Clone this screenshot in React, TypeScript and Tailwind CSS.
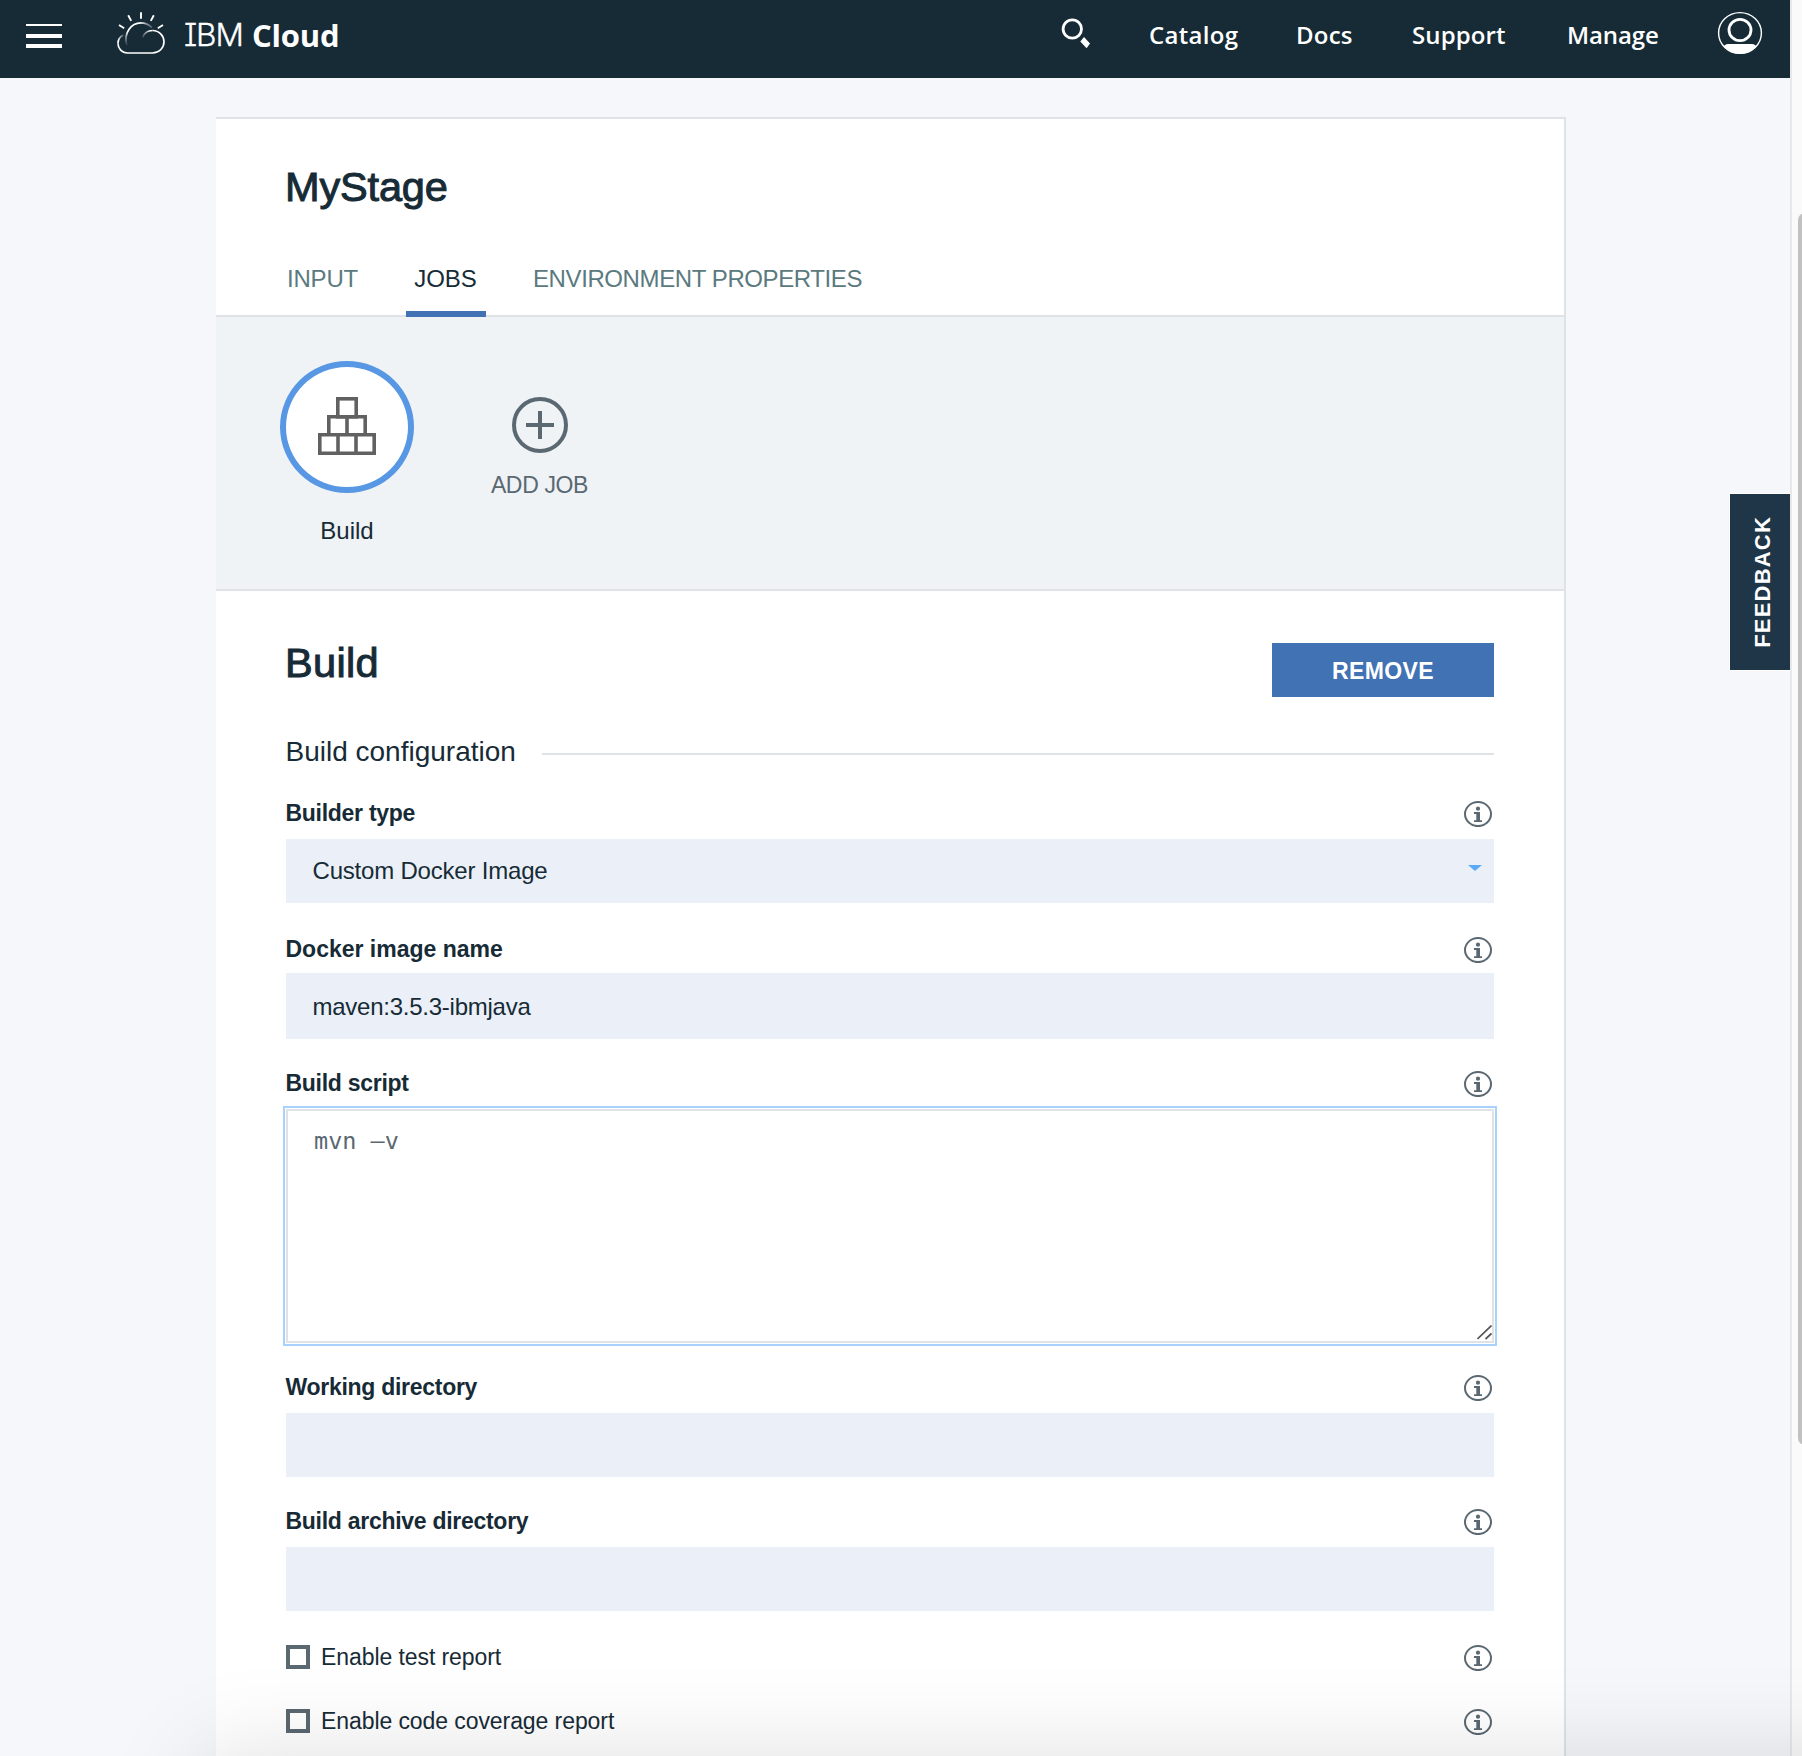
import type { ReactNode } from 'react';

function CloudLogo() {
  return (
    <svg width="50" height="44" viewBox="116 11 50 44" fill="none" stroke="#fff" strokeWidth="1.7" className="block">
      <defs>
        <linearGradient id="arcFade" gradientUnits="userSpaceOnUse" x1="126" y1="46" x2="153" y2="26">
          <stop offset="0" stopColor="#fff" stopOpacity="0" />
          <stop offset="0.3" stopColor="#fff" />
          <stop offset="0.75" stopColor="#fff" />
          <stop offset="1" stopColor="#fff" stopOpacity="0.1" />
        </linearGradient>
        <linearGradient id="rightFade" gradientUnits="userSpaceOnUse" x1="142" y1="37" x2="150" y2="30">
          <stop offset="0" stopColor="#fff" stopOpacity="0.1" />
          <stop offset="1" stopColor="#fff" />
        </linearGradient>
        <linearGradient id="leftFade" gradientUnits="userSpaceOnUse" x1="124" y1="34" x2="118" y2="40">
          <stop offset="0" stopColor="#fff" stopOpacity="0.1" />
          <stop offset="1" stopColor="#fff" />
        </linearGradient>
      </defs>
      <path d="M126.6 45C123.5 33 131 22.8 141 22.8c4.400 0 8 1.700 11 4.500" stroke="url(#arcFade)" />
      <path d="M142.500 37.500C144.500 32.500 148.500 30.500 152.500 30.500" stroke="url(#rightFade)" />
      <path d="M152.500 30.500c6.500 0 11.500 5 11.500 11.300S159 53 152.500 53H127.500c-5.500 0-9.500-4.300-9.500-9.500" />
      <path d="M118 43.500c0-3.800 2-7 5.500-8.600" stroke="url(#leftFade)" />
      <path d="M141 12.200v6.500M128.200 15.300l3 5.600M153.800 15.300l-3 5.600M119 25l5.200 3.300M163 25l-5.200 3.300" strokeWidth="1.900" />
    </svg>
  );
}

function SearchIcon() {
  return (
    <svg width="30" height="32" viewBox="1061 17 30 32" fill="none" stroke="#fff" className="block">
      <circle cx="1072.300" cy="29" r="9.200" strokeWidth="2.800" />
      <path d="M1080.300 41.500l3.700-4.500 6 6.500-3.400 4.800z" fill="#fff" stroke="none" />
    </svg>
  );
}

function AvatarIcon() {
  return (
    <svg width="46" height="44" viewBox="1717 11 46 44" fill="none" stroke="#fff" className="block">
      <defs>
        <clipPath id="avatarClip">
          <ellipse cx="1740" cy="33" rx="21.800" ry="20.800" />
        </clipPath>
      </defs>
      <ellipse cx="1740" cy="33" rx="21.400" ry="20.400" strokeWidth="1.400" />
      <ellipse cx="1740" cy="30" rx="11" ry="10.700" strokeWidth="2.800" />
      <path d="M1722 54V48q3-4 6-4h24q3 0 6 4v6z" fill="#fff" stroke="none" clipPath="url(#avatarClip)" />
    </svg>
  );
}

function BlocksIcon() {
  return (
    <svg width="58" height="58" viewBox="0 0 58 58" fill="none" stroke="#616161" strokeWidth="3.600" className="block">
      <rect x="19.800" y="1.800" width="18.400" height="18" />
      <path d="M10.800 37.800V19.800h36.400v18M29 19.800v18" />
      <path d="M1.800 37.800h54.400v18.400H1.800zM20 37.800v18.400M38 37.800v18.400" />
    </svg>
  );
}

function InfoIcon() {
  return (
    <svg width="28" height="26" viewBox="0 0 28 26" className="block shrink-0" fill="#5a6872">
      <ellipse cx="14" cy="13.100" rx="13" ry="12" fill="none" stroke="#5a6872" strokeWidth="2" />
      <circle cx="14" cy="7.700" r="2.100" />
      <path d="M10 11h6v8.200h2v1.700h-8v-1.700h2.300v-6.300H10z" />
    </svg>
  );
}

function LabelRow({ children, className }: { children: ReactNode; className: string }) {
  return (
    <div className={`flex h-[26px] items-start justify-between pr-[2px] ${className}`}>
      <div className="ml-[-0.5px] text-[23px] leading-6 font-bold">{children}</div>
      <InfoIcon />
    </div>
  );
}

function CheckRow({ children, className }: { children: ReactNode; className: string }) {
  return (
    <div className={`flex h-[26px] items-start pr-[2px] ${className}`}>
      <div className="size-6 border-4 border-[#5a6872] bg-white" />
      <div className="ml-[11px] flex-1 text-[23px] leading-[25px] tracking-[-0.08px]">{children}</div>
      <InfoIcon />
    </div>
  );
}

function Header() {
  return (
    <header className="flex h-[78px] items-start bg-[#172b36] text-white">
      <div className="mt-6 ml-[26px] w-9">
        <div className="h-[2px] bg-white" />
        <div className="mt-2 h-1 bg-white" />
        <div className="mt-[6px] h-1 bg-white" />
      </div>
      <div className="mt-[11px] ml-[54px]">
        <CloudLogo />
      </div>
      <div className="mt-[15px] ml-[18px] flex w-[877px] text-[32px] leading-10 whitespace-nowrap">
        <span className="w-[68px] font-[Inter] text-[31.5px] font-light tracking-[-1.1px] [-webkit-text-stroke:0.3px_#fff] [font-feature-settings:'cv08']">IBM</span>
        <span className="font-['Open_Sans'] text-[31px] font-bold tracking-[-0.2px]">Cloud</span>
      </div>
      <div className="mt-[17px] w-[88px]">
        <SearchIcon />
      </div>
      <nav className="mt-[19px] flex font-['Open_Sans'] text-[24px] leading-8 font-semibold whitespace-nowrap">
        <span className="w-[147px] tracking-[0.3px]">Catalog</span>
        <span className="w-[116px] tracking-[0.2px]">Docs</span>
        <span className="w-[155px] tracking-[0.1px]">Support</span>
        <span className="w-[150px] tracking-[-0.1px]">Manage</span>
      </nav>
      <div className="mt-[11px]">
        <AvatarIcon />
      </div>
    </header>
  );
}

export default function App() {
  return (
    <div className="relative flex h-[1756px] w-[1802px] overflow-hidden bg-[#f5f7fb] font-['Liberation_Sans',sans-serif] text-[#172b36]">
      <div className="w-[1790px] shrink-0">
        <Header />
        <main className="mt-[39px] ml-[216px] h-[1639px] w-[1350px] border-t-2 border-r-2 border-[#dfe3e6] bg-white">
          <h1 className="h-[91px] pt-[44px] pl-[69px] text-[41.5px] leading-[48px] tracking-[-0.15px] [-webkit-text-stroke:1px_#172b36]">MyStage</h1>
          <div className="mt-[53px] flex h-[54px] border-b-2 border-[#dfe3e6] text-[24px] leading-8 whitespace-nowrap text-[#5a7a80]">
            <div className="w-[190px] pl-[71px] tracking-[-0.2px]">INPUT</div>
            <div className="h-[54px] w-20 border-b-[6px] border-[#4172b3] pr-px text-center text-[#172b36]">JOBS</div>
            <div className="pl-[47px] tracking-[-0.4px]">ENVIRONMENT PROPERTIES</div>
          </div>
          <div className="flex h-[274px] border-b-2 border-[#dfe3e6] bg-[#eff3f6] pl-16">
            <div className="mt-11 w-[134px] text-center">
              <div className="flex h-[132px] items-center justify-center rounded-[50%] border-6 border-[#5897e3] bg-white">
                <div className="mt-[-2px]">
                  <BlocksIcon />
                </div>
              </div>
              <div className="mt-[22px] text-[24px] leading-8">Build</div>
            </div>
            <div className="mt-20 ml-[76px] w-[100px] text-center">
              <div className="mx-auto flex size-14 items-center justify-center rounded-full border-4 border-[#5a6872]">
                <svg width="28" height="28" viewBox="0 0 28 28" fill="#5a6872">
                  <path d="M12 0h4v12h12v4H16v12h-4V16H0v-4h12z" />
                </svg>
              </div>
              <div className="mt-4 ml-[-1px] text-[23px] leading-8 tracking-[-0.35px] whitespace-nowrap text-[#5a6872]">ADD JOB</div>
            </div>
          </div>
          <section className="pt-[47px] pr-[70px] pl-[70px]">
            <div className="flex h-[59px] items-start justify-between">
              <h2 className="mt-px ml-[-1px] text-[41.5px] leading-[48px] tracking-[0.35px] [-webkit-text-stroke:1px_#172b36]">Build</h2>
              <button className="mt-[5px] h-[54px] w-[222px] bg-[#4172b3] pt-[2px] text-[23px] font-bold tracking-[0.4px] text-white">REMOVE</button>
            </div>
            <div className="mt-[38px] flex h-8 items-start">
              <h3 className="mt-px ml-[-0.5px] w-[256.5px] text-[28px] leading-8">Build configuration</h3>
              <div className="mt-[18px] h-[2px] flex-1 bg-[#dfe3e6]" />
            </div>

            <LabelRow className="mt-[34px] tracking-[-0.28px]">Builder type</LabelRow>
            <div className="mt-3 flex h-16 items-start justify-between bg-[#ebf0f8] pr-3 pl-[26.5px] text-[24px] leading-[64px]">
              <span className="tracking-[-0.2px]">Custom Docker Image</span>
              <svg width="14" height="6" viewBox="0 0 14 6" className="mt-[26px]">
                <path d="M0 0h14L7 6z" fill="#5aaafa" />
              </svg>
            </div>

            <LabelRow className="mt-[34px]">Docker image name</LabelRow>
            <div className="mt-[10px] h-[66px] bg-[#ebf0f8] pl-[26.5px] text-[24px] leading-[67px] tracking-[-0.25px]">maven:3.5.3-ibmjava</div>

            <LabelRow className="mt-8 tracking-[-0.28px]">Build script</LabelRow>
            <div className="mx-[-3px] mt-[9px] h-[240px] border-2 border-[#a8d1ff] p-px">
              <div className="flex h-full items-start justify-between border-2 border-[#dfe3e6]">
                <div className="pt-[14px] pl-[26px] font-['DejaVu_Sans_Mono',monospace] text-[23.5px] leading-8 text-[#5a6872]">mvn –v</div>
                <svg width="15" height="16" viewBox="0 0 15 16" className="self-end" fill="none" stroke="#555" strokeWidth="1.700">
                  <path d="M0.500 14L14.500 0.500M8.500 14L14.500 8.500" />
                </svg>
              </div>
            </div>

            <LabelRow className="mt-[29px] tracking-[-0.28px]">Working directory</LabelRow>
            <div className="mt-3 h-16 bg-[#ebf0f8]" />

            <LabelRow className="mt-8 tracking-[-0.28px]">Build archive directory</LabelRow>
            <div className="mt-3 h-16 bg-[#ebf0f8]" />

            <CheckRow className="mt-[34px]">Enable test report</CheckRow>
            <CheckRow className="mt-[38px]">Enable code coverage report</CheckRow>
          </section>
        </main>
      </div>

      <div className="flex w-3 shrink-0 border-l-2 border-[#e8e8e8] bg-[#fafafa] pt-[213px] pl-[6px]">
        <div className="h-[1232px] w-4 shrink-0 rounded-l-[7px] bg-[#c1c1c1]" />
      </div>

      <div className="absolute top-[493px] left-[1729px] flex h-[178px] w-[61px] items-center justify-center border border-r-0 border-white bg-[#1f3548]">
        <span className="mr-[-5px] rotate-180 text-[22px] leading-8 font-bold tracking-[1.2px] text-white [writing-mode:vertical-rl]">FEEDBACK</span>
      </div>

      {/* soft shadow rising from the bottom edge */}
      <div className="absolute top-[1756px] left-[200px] h-[300px] w-[1900px] shadow-[0_0_90px_rgba(0,0,0,0.13)]" />
    </div>
  );
}
